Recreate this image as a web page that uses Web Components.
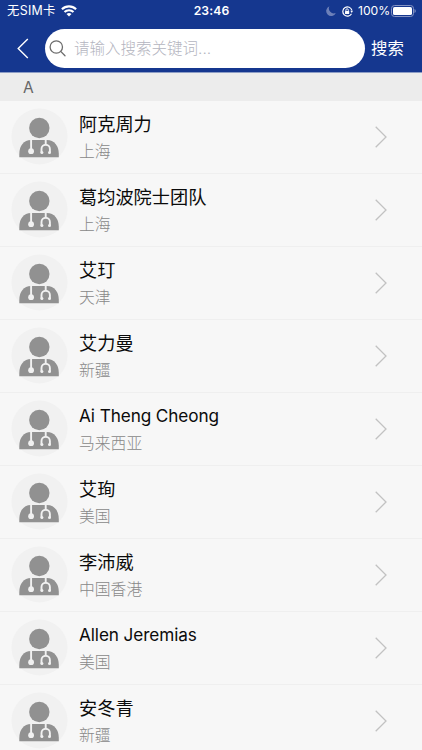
<!DOCTYPE html>
<html lang="zh-CN">
<head>
<meta charset="utf-8">
<meta name="viewport" content="width=device-width, initial-scale=1">
<title>搜索</title>
<style>
  body {
    margin: 0;
    height: 750px;
    overflow: hidden;
    background: #f7f7f7;
    font-family: Inter, "Noto Sans CJK SC", sans-serif;
  }
</style>
</head>
<body>
<doctor-page></doctor-page>

<template id="status-bar">
  <style>
    :host {
      display: grid;
      grid-template-columns: 1fr auto 1fr;
      align-items: center;
      height: 22px;
      padding: 0 6px 0 7px;
      color: #fff;
      font-size: 12.5px;
      line-height: 22px;
    }
    .left, .right {
      display: flex;
      align-items: center;
    }
    .right {
      justify-content: flex-end;
    }
    .carrier {
      font-size: 12.4px;
      letter-spacing: 0.3px;
    }
    .time {
      font-weight: 600;
      font-size: 12.2px;
      letter-spacing: 0.1px;
    }
    .level {
      font-size: 12.2px;
      letter-spacing: -0.1px;
    }
    svg {
      display: block;
      flex: none;
    }
    .wifi { margin-left: 5px; }
    .lock { margin: 0 5px 0 6px; }
    .battery { margin-left: 1px; }
  </style>
  <div class="left">
    <span class="carrier"><slot name="carrier"></slot></span>
    <svg class="wifi" width="16" height="12" viewBox="0 0 16 12" fill="none" stroke="#fff" stroke-width="2.1">
      <path d="M.9 4.3a10.1 10.1 0 0 1 14.2 0" />
      <path d="M3.5 7.1a6.4 6.4 0 0 1 9 0" />
      <path d="M8 11.6 5.5 9.1a3.6 3.6 0 0 1 5 0Z" fill="#fff" stroke="none" />
    </svg>
  </div>
  <span class="time"><slot name="time"></slot></span>
  <div class="right">
    <svg width="10" height="10" viewBox="0 0 10 10">
      <path d="M3.4.3A5 5 0 1 0 9.8 6.9 4.9 4.9 0 0 1 3.4.3Z" fill="#6d80b9" />
    </svg>
    <svg class="lock" width="11" height="11" viewBox="0 0 11 11" fill="none" stroke="#fff">
      <path d="M9.5 7.7A4.6 4.6 0 1 1 9.9 4.4" stroke-width="1.2" />
      <path d="M8.3 4.8h2.7L9.8 7Z" fill="#fff" stroke="none" />
      <rect x="3" y="4.9" width="4.2" height="3.2" rx=".5" fill="#fff" stroke="none" />
      <path d="M3.9 5V4a1.2 1.2 0 0 1 2.4 0v1" stroke-width=".9" />
    </svg>
    <span class="level"><slot name="level"></slot></span>
    <svg class="battery" width="25" height="12" viewBox="0 0 25 12">
      <rect x=".5" y=".5" width="22" height="11" rx="3" fill="none" stroke="#8594c4" />
      <rect x="2" y="2" width="19" height="8" rx="1.6" fill="#fff" />
      <path d="M23.5 4a2.2 2.2 0 0 1 0 4Z" fill="#8594c4" />
    </svg>
  </div>
</template>

<template id="search-bar">
  <style>
    :host {
      display: flex;
      align-items: center;
      height: 50px;
      color: #fff;
    }
    .back {
      flex: none;
      margin: 2px 0 0 17px;
    }
    .field {
      box-sizing: border-box;
      display: flex;
      align-items: center;
      width: 320px;
      height: 39px;
      margin: 2px 0 0 16px;
      padding-left: 4px;
      border-radius: 20px;
      background: #fff;
    }
    .hint {
      margin-left: 8px;
      color: #b4b5c0;
      font-weight: 300;
      font-size: 15.5px;
      line-height: 39px;
      white-space: nowrap;
    }
    .action {
      margin: 2px 0 0 6px;
      font-size: 16.4px;
      line-height: 50px;
    }
    svg { display: block; }
  </style>
  <svg class="back" width="12" height="21" viewBox="0 0 12 21" fill="none" stroke="#fff" stroke-width="1.4">
    <path d="M10.8 1 1.2 10.5 10.8 20" />
  </svg>
  <div class="field">
    <svg width="17" height="17" viewBox="0 0 17 17" fill="none" stroke="#6c6c6c" stroke-width="1.3">
      <circle cx="7.3" cy="7" r="6.2" />
      <path d="m11.7 11.4 4.3 4.3" stroke-linecap="round" />
    </svg>
    <span class="hint"><slot name="hint"></slot></span>
  </div>
  <span class="action"><slot name="action"></slot></span>
</template>

<template id="doctor-row">
  <style>
    :host {
      box-sizing: border-box;
      display: flex;
      align-items: center;
      height: 73px;
      padding: 0 35px 0 11px;
      border-bottom: 1px solid #efefef;
      background: #f7f7f7;
    }
    .avatar {
      flex: none;
      width: 57px;
      height: 57px;
      margin-bottom: 1px;
    }
    .text {
      flex: 1;
      margin-left: 11px;
      padding-top: 2px;
    }
    .name {
      color: #0b0b0b;
      font-size: 18.2px;
      line-height: 27px;
    }
    .place {
      color: #888;
      font-weight: 300;
      font-size: 15.8px;
      line-height: 27px;
    }
    .name, .place {
      white-space: nowrap;
    }
    :host([latin]) .name {
      margin-bottom: 2px;
      font-size: 17.2px;
      letter-spacing: -0.1px;
      line-height: 25px;
    }
    :host([latin]) .place {
      line-height: 28px;
    }
  </style>
  <svg class="avatar" viewBox="0 0 57 57">
    <circle cx="28.5" cy="28.5" r="28" fill="#f1f1f1" />
    <circle cx="28.3" cy="20" r="10.2" fill="#919191" />
    <path d="M8.3 49.3V46c0-8.3 4.5-14 11.7-14h16c7.2 0 11.8 5.7 11.8 14v3.3Z" fill="#919191" />
    <g fill="none" stroke="#f1f1f1" stroke-width="1.9">
      <path d="M20.1 31v12" />
      <path d="M34.7 31v6M30.5 44.5v-3.600a4.200 4.200 0 0 1 8.400 0v3.600" />
    </g>
    <g fill="#f1f1f1">
      <circle cx="20.1" cy="43.2" r="2.9" />
      <circle cx="30.9" cy="44.5" r="1.5" />
      <circle cx="38.5" cy="44.5" r="1.5" />
    </g>
  </svg>
  <div class="text">
    <div class="name"><slot name="name"></slot></div>
    <div class="place"><slot name="place"></slot></div>
  </div>
  <svg width="12" height="22" viewBox="0 0 12 22" fill="none" stroke="#c2c2c2" stroke-width="1.3">
    <path d="M.7.7 11 11 .7 21.3" />
  </svg>
</template>

<template id="doctor-page">
  <style>
    :host {
      display: block;
      height: 750px;
      overflow: hidden;
    }
    header {
      height: 72px;
      background: #15378f;
      border-bottom: 1px solid #8d9dc5;
    }
    .letter {
      height: 28px;
      padding-left: 23px;
      background: #ececec;
      color: #666;
      font-size: 15.5px;
      line-height: 29px;
    }
  </style>
  <header>
    <status-bar>
      <span slot="carrier">无SIM卡</span>
      <span slot="time">23:46</span>
      <span slot="level">100%</span>
    </status-bar>
    <search-bar>
      <span slot="hint">请输入搜索关键词...</span>
      <span slot="action">搜索</span>
    </search-bar>
  </header>
  <div class="letter">A</div>
  <main></main>
</template>

<script>
  const doctors = [
    ["阿克周力", "上海"],
    ["葛均波院士团队", "上海"],
    ["艾玎", "天津"],
    ["艾力曼", "新疆"],
    ["Ai Theng Cheong", "马来西亚"],
    ["艾珣", "美国"],
    ["李沛威", "中国香港"],
    ["Allen Jeremias", "美国"],
    ["安冬青", "新疆"],
  ];

  class TemplateElement extends HTMLElement {
    constructor() {
      super();
      const template = document.getElementById(this.localName);
      this.attachShadow({ mode: "open" });
      this.shadowRoot.appendChild(template.content.cloneNode(true));
    }
  }

  class StatusBar extends TemplateElement {}
  class SearchBar extends TemplateElement {}
  class DoctorRow extends TemplateElement {}

  class DoctorPage extends TemplateElement {
    connectedCallback() {
      const list = this.shadowRoot.querySelector("main");
      for (const [name, place] of doctors) {
        const row = document.createElement("doctor-row");
        row.toggleAttribute("latin", /^[A-Za-z ]+$/.test(name));
        row.append(this.part("name", name), this.part("place", place));
        list.appendChild(row);
      }
    }
    part(slot, text) {
      const span = document.createElement("span");
      span.slot = slot;
      span.textContent = text;
      return span;
    }
  }

  customElements.define("status-bar", StatusBar);
  customElements.define("search-bar", SearchBar);
  customElements.define("doctor-row", DoctorRow);
  customElements.define("doctor-page", DoctorPage);
</script>
</body>
</html>
